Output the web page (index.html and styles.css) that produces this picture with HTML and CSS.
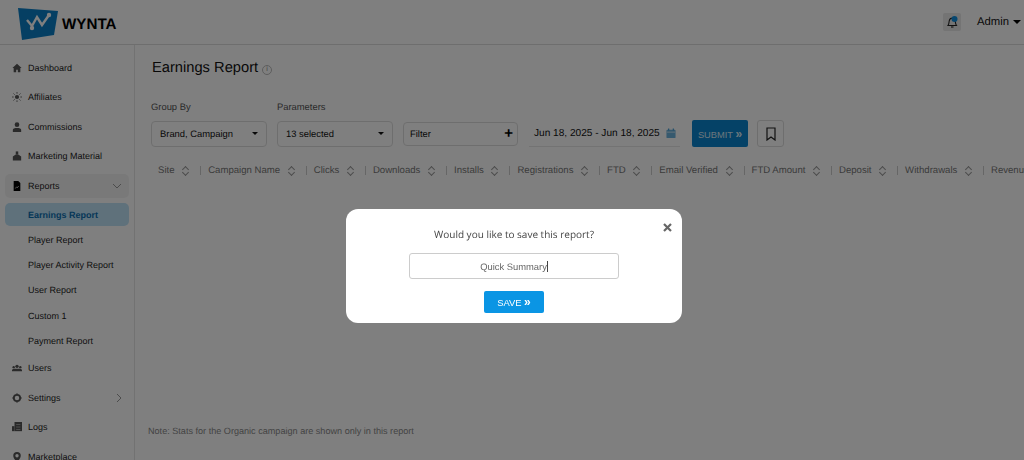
FILE: index.html
```html
<!DOCTYPE html>
<html lang="en">
<head>
<meta charset="utf-8">
<title>Earnings Report</title>
<link rel="stylesheet" href="styles.css">
</head>
<body>
<div class="app">
  <header class="topbar">
    <div class="logo">
      <svg class="logo-mark" width="41" height="33" viewBox="0 0 41 33"><polygon points="0,0 40,3 36,27 4,32" fill="#0b7fc7"/><path d="M9 12l5 6 5-9 5 8 7-10" fill="none" stroke="#fff" stroke-width="2.400"/><circle cx="14" cy="20" r="2.200" fill="#fff"/><circle cx="31" cy="7" r="2.200" fill="#fff"/></svg>
      <span class="logo-text">WYNTA</span>
    </div>
    <div class="top-right">
      <span class="bell"><svg width="14" height="14" viewBox="0 0 14 14"><path d="M3 10.500c1-1.500 1-3 1.200-4.500C4.500 4 6 3 7.500 3S10 4.500 10.200 6c.2 1.500.3 3 1.300 4.500z" fill="none" stroke="#222" stroke-width="1.100"/><path d="M6 12h2.500" stroke="#222" stroke-width="1.100"/><circle cx="9.500" cy="4" r="3" fill="#0f8fe0"/></svg></span>
      <span class="admin">Admin</span><span class="caret"></span>
    </div>
  </header>
  <div class="body-row">
    <nav class="sidebar">
      <a class="nav-item"><svg class="nav-icon" viewBox="0 0 12 12"><path d="M6 1L.5 6H2v5h3V8h2v3h3V6h1.500z"/></svg>Dashboard</a>
      <a class="nav-item"><svg class="nav-icon" viewBox="0 0 12 12"><circle cx="6" cy="6" r="2.500"/><path d="M6 0v2M6 10v2M0 6h2M10 6h2M1.800 1.800l1.400 1.400M8.800 8.800l1.400 1.400M1.800 10.200l1.400-1.400M8.800 3.200l1.400-1.400" stroke="#555" fill="none"/></svg>Affiliates</a>
      <a class="nav-item"><svg class="nav-icon" viewBox="0 0 12 12"><circle cx="6" cy="3.200" r="2.800"/><path d="M1 12V9.500C1 8 3 7.200 6 7.200s5 .8 5 2.300V12z"/></svg>Commissions</a>
      <a class="nav-item"><svg class="nav-icon" viewBox="0 0 12 12"><rect x="4.500" y="0.500" width="3" height="4"/><path d="M1 6.500l3-2h4l3 2V11.500H1z"/></svg>Marketing Material</a>
      <a class="nav-item nav-open"><svg class="nav-icon dark" viewBox="0 0 12 12"><path d="M2 0h5.500L10 2.500V12H2z"/><path d="M4 9l1.500-2 1 1L8 6" stroke="#fff" fill="none" stroke-width=".8"/></svg>Reports<svg class="chev" width="10" height="6" viewBox="0 0 10 6"><path d="M1 1l4 4 4-4" fill="none" stroke="#999"/></svg></a>
      <div class="submenu">
        <a class="sub-item sub-active">Earnings Report</a>
        <a class="sub-item">Player Report</a>
        <a class="sub-item">Player Activity Report</a>
        <a class="sub-item">User Report</a>
        <a class="sub-item">Custom 1</a>
        <a class="sub-item">Payment Report</a>
      </div>
      <a class="nav-item"><svg class="nav-icon" viewBox="0 0 12 12"><circle cx="6" cy="4" r="2"/><circle cx="2" cy="5" r="1.400"/><circle cx="10" cy="5" r="1.400"/><path d="M0 10V8l2-1 2 0 4 0 2 0 2 1v2z"/></svg>Users</a>
      <a class="nav-item"><svg class="nav-icon" viewBox="0 0 12 12"><circle cx="6" cy="6" r="3.800" fill="none" stroke="#555" stroke-width="2.200"/><path d="M6 0v2M6 10v2M0 6h2M10 6h2" stroke="#555"/></svg>Settings<svg class="chev" width="6" height="10" viewBox="0 0 6 10"><path d="M1 1l4 4-4 4" fill="none" stroke="#999"/></svg></a>
      <a class="nav-item"><svg class="nav-icon" viewBox="0 0 12 12"><path d="M3 0h9v11H3z"/><path d="M0 5h3v6H0z"/><path d="M5 3h5M5 6h5M5 9h5" stroke="#aaa" fill="none"/></svg>Logs</a>
      <a class="nav-item"><svg class="nav-icon" viewBox="0 0 12 12"><path d="M6 0a4.500 4.500 0 0 0-4.500 4.500C1.500 8 6 12 6 12s4.500-4 4.500-7.500A4.500 4.500 0 0 0 6 0z"/><circle cx="6" cy="4.500" r="2" fill="#fff"/></svg>Marketplace</a>
    </nav>
    <main class="content">
      <h1 class="title">Earnings Report <span class="info">i</span></h1>
      <div class="filters">
        <div class="field w-group"><label class="field-label">Group By</label><div class="select"><span>Brand, Campaign</span><i class="sel-caret"></i></div></div>
        <div class="field w-params"><label class="field-label">Parameters</label><div class="select"><span>13 selected</span><i class="sel-caret"></i></div></div>
        <div class="select filter-box"><span>Filter</span><b class="plus">+</b></div>
        <div class="date"><span>Jun 18, 2025 - Jun 18, 2025</span><svg width="10" height="11" viewBox="0 0 11 11"><rect x="0.500" y="1.500" width="10" height="9" rx="1" fill="#0b7fc7" opacity=".6"/><path d="M3 0v2M8 0v2" stroke="#0b7fc7"/><path d="M1 4h9" stroke="#fff" stroke-width=".7"/></svg></div>
        <button class="submit">SUBMIT <span class="chevrons">»</span></button>
        <button class="bookmark"><svg width="10" height="14" viewBox="0 0 10 14"><path d="M1 1h8v12L5 10l-4 3z" fill="none" stroke="#222" stroke-width="1.200"/></svg></button>
      </div>
      <div class="columns">
        <div class="col c-site">Site<i class="sort"></i></div>
        <div class="col">Campaign Name<i class="sort"></i></div>
        <div class="col">Clicks<i class="sort"></i></div>
        <div class="col">Downloads<i class="sort"></i></div>
        <div class="col">Installs<i class="sort"></i></div>
        <div class="col">Registrations<i class="sort"></i></div>
        <div class="col">FTD<i class="sort"></i></div>
        <div class="col">Email Verified<i class="sort"></i></div>
        <div class="col">FTD Amount<i class="sort"></i></div>
        <div class="col">Deposit<i class="sort"></i></div>
        <div class="col">Withdrawals<i class="sort"></i></div>
        <div class="col">Revenue</div>
      </div>
      <p class="note">Note: Stats for the Organic campaign are shown only in this report</p>
    </main>
  </div>
</div>
<div class="overlay">
  <div class="modal">
    <svg class="close" width="9" height="9" viewBox="0 0 9 9"><path d="M1 1l7 7M8 1L1 8" stroke="#666" stroke-width="2.200"/></svg>
    <p class="modal-title">Would you like to save this report?</p>
    <div class="modal-input"><span>Quick Summary</span><i class="cursor"></i></div>
    <button class="save">SAVE <span class="chevrons">»</span></button>
  </div>
</div>
</body>
</html>
```
FILE: styles.css
```css
* { box-sizing: border-box; }
html, body { margin: 0; height: 460px; overflow: hidden; }
body { font-family: "Liberation Sans", Arial, sans-serif; background: #fff; color: #333; text-rendering: geometricPrecision; }
.app { width: 1024px; height: 460px; overflow: hidden; display: flex; flex-direction: column; }

.topbar { height: 45px; flex: none; display: flex; align-items: center; justify-content: space-between; border-bottom: 1px solid #ddd; padding: 0 3px 0 18px; }
.logo { display: flex; align-items: center; gap: 3px; padding-top: 4px; }
.logo-text { font-size: 15.200px; font-weight: 700; color: #000; }
.top-right { display: flex; align-items: center; }
.bell { width: 18px; height: 18px; background: #e8e8e8; border-radius: 2px; display: flex; align-items: center; justify-content: center; margin-right: 16px; }
.admin { font-size: 11.300px; color: #111; }
.caret { width: 0; height: 0; border: 4px solid transparent; border-top-color: #000; border-bottom: 0; margin-left: 4px; }

.body-row { flex: 1; display: flex; min-height: 0; }
.sidebar { width: 135px; flex: none; border-right: 1px solid #e4e4e4; padding: 8px 5px 0; display: flex; flex-direction: column; }
.nav-item { height: 29.500px; flex: none; display: flex; align-items: center; padding-left: 7px; font-size: 9px; color: #1c1c1c; border-radius: 5px; }
.nav-icon { width: 10px; height: 10px; margin-right: 6px; fill: #555; flex: none; }
.nav-icon.dark { fill: #000; }
.nav-open { background: #f3f3f3; height: 24px; margin: 3px 0 5px; }
.chev { margin-left: auto; margin-right: 7px; }
.submenu { display: flex; flex-direction: column; }
.sub-item { height: 25.300px; flex: none; display: flex; align-items: center; padding-left: 23px; font-size: 9px; color: #1c1c1c; border-radius: 5px; }
.sub-active { background: #bfe2f7; color: #0b6fb0; font-weight: 700; height: 23px; margin-bottom: 1px; }

.content { flex: 1; min-width: 0; padding: 0 0 0 16px; position: relative; overflow: hidden; }
.title { margin: 13px 0 0 1px; font-size: 14.700px; font-weight: 400; color: #111; line-height: 20px; display: flex; align-items: center; gap: 4px; }
.info { width: 10px; height: 10px; border: 1px solid #bbb; border-radius: 50%; font-size: 7px; line-height: 8px; text-align: center; color: #888; margin-top: 3px; }
.filters { display: flex; align-items: flex-end; margin-top: 23px; }
.field { display: flex; flex-direction: column; }
.field-label { font-size: 9.400px; color: #555; line-height: 11px; margin-bottom: 9px; }
.w-group { width: 116px; margin-right: 10px; }
.w-params { width: 116px; margin-right: 10px; }
.select { height: 26px; border: 1px solid #ddd; border-radius: 4px; display: flex; align-items: center; justify-content: space-between; padding: 0 8px 1px; font-size: 9.400px; color: #111; }
.sel-caret { width: 0; height: 0; border: 3px solid transparent; border-top-color: #111; border-bottom: 0; }
.filter-box { width: 115px; height: 24px; padding: 0 4px 1px 6px; margin-bottom: 1px; }
.plus { font-size: 15px; line-height: 15px; color: #000; }
.date { width: 151px; height: 26px; margin-left: 11px; border-bottom: 1px solid #e6e6e6; display: flex; align-items: center; padding-left: 5px; gap: 6px; font-size: 10.100px; color: #111; white-space: nowrap; }
.submit { width: 56px; height: 27px; margin-left: 12px; background: #0b84cf; border: 0; border-radius: 2px; color: #d8ecf8; font: 9.300px "Liberation Sans", Arial, sans-serif; padding: 0; }
.chevrons { font-size: 12px; font-weight: 700; }
.bookmark { width: 27px; height: 27px; margin-left: 9px; background: #fff; border: 1px solid #ddd; border-radius: 3px; display: flex; align-items: center; justify-content: center; padding: 0; }
.columns { display: flex; margin-top: 19px; font-size: 9.600px; color: #777; white-space: nowrap; padding-left: 7px; line-height: 12px; }
.col { display: flex; align-items: center; padding-left: 7px; border-left: 1px solid #ccc; height: 9px; }
.c-site { border-left: 0; padding-left: 0; }
.sort { width: 6px; height: 10px; margin: 0 12px 0 7.600px; flex: none; position: relative; }
.sort::before, .sort::after { content: ""; position: absolute; left: 1px; width: 4px; height: 4px; border-left: 1px solid #999; border-top: 1px solid #999; transform: rotate(45deg); }
.sort::before { top: 1px; }
.sort::after { bottom: 1px; transform: rotate(225deg); }
.note { position: absolute; left: 13px; top: 381px; margin: 0; font-size: 9.100px; color: #888; }

.overlay { position: fixed; inset: 0; background: rgba(0,0,0,.5); backdrop-filter: blur(.4px); display: flex; align-items: flex-start; justify-content: center; padding-top: 209px; padding-left: 4px; }
.modal { position: relative; width: 336px; height: 114px; background: #fff; border-radius: 12px; display: flex; flex-direction: column; align-items: center; filter: blur(.2px); }
.close { position: absolute; right: 10px; top: 14px; }
.modal-title { margin: 19px 0 0; font-family: "Open Sans", sans-serif; font-size: 10px; line-height: 13px; color: #444; }
.modal-input { width: 210px; height: 26px; margin-top: 12px; border: 1px solid #ccc; border-radius: 3px; display: flex; align-items: center; justify-content: center; font-size: 9.400px; color: #666; }
.cursor { width: 1px; height: 11px; background: #444; }
.save { width: 60px; height: 22px; margin-top: 12px; background: #0a95e4; border: 0; border-radius: 2px; color: #fff; font: 9.400px "Liberation Sans", Arial, sans-serif; padding: 0 0 1px; }
```
